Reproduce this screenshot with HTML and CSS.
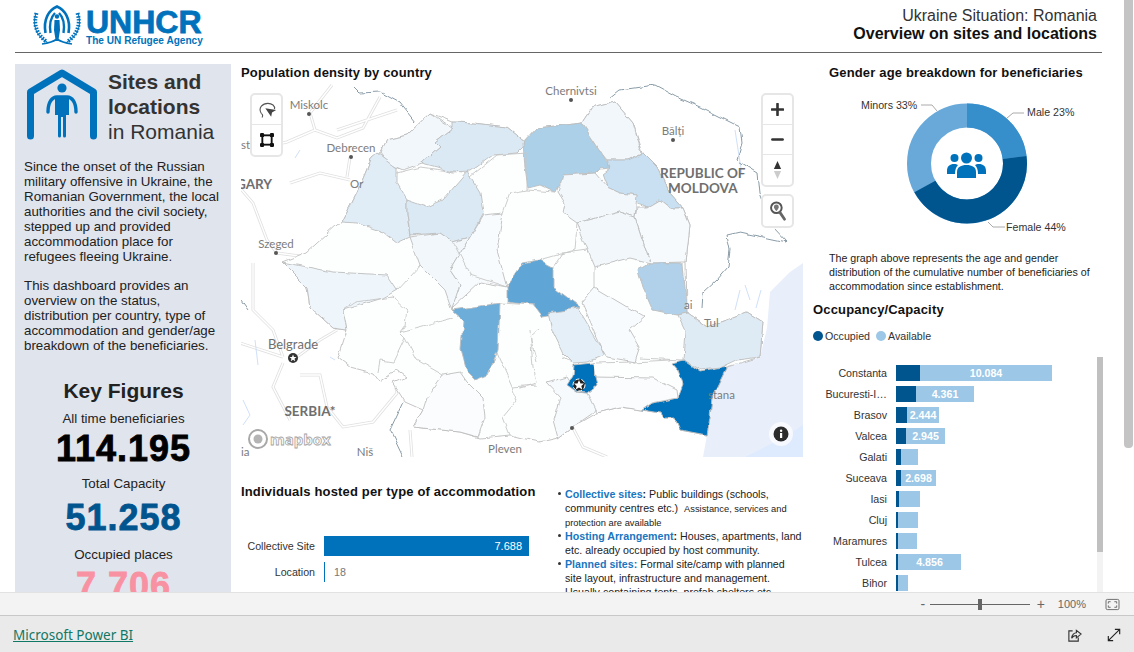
FILE: index.html
```html
<!DOCTYPE html>
<html lang="en">
<head>
    <meta charset="UTF-8">
    <title>Ukraine Situation: Romania</title>
    <link rel="stylesheet" href="styles.css">
</head>
<body>
<div class="page">
    <div class="report">
        <header class="top">
            <div class="brand">
                <svg class="emblem" viewBox="0 0 48 42" width="48" height="42">
                    <g fill="none" stroke="#0072bc">
                        <path d="M3 8 C-1 20 3 31 14 37" stroke-width="1"/>
                        <path d="M45 8 C49 20 45 31 34 37" stroke-width="1"/>
                        <path d="M3.500 8 C0 20 4 30 14 37" stroke-width="4" stroke-dasharray="1.600 1.400"/>
                        <path d="M44.500 8 C48 20 44 30 34 37" stroke-width="4" stroke-dasharray="1.600 1.400"/>
                        <path d="M9 39 C16 38 20 37 24 34 C28 37 32 38 39 39" stroke-width="1.600"/>
                        <path d="M12.500 28 C10 14 16 5 24 1.500 C32 5 38 14 35.500 28" stroke-width="2.600"/>
                        <path d="M17.500 28 C16 18 19 11 22 8 M30.500 28 C32 18 29 11 26 8" stroke-width="2.400"/>
                    </g>
                    <circle cx="24" cy="11.500" r="2.200" fill="#0072bc"/>
                    <path fill="#0072bc" d="M21.500 15 H26.500 L27 25 L25.600 34 H22.400 L21 25 Z"/>
                </svg>
                <div class="wordmark">
                    <span class="wordmark-big">UNHCR</span>
                    <span class="wordmark-small">The UN Refugee Agency</span>
                </div>
            </div>
            <div class="top-title">
                <div>Ukraine Situation: Romania</div>
                <div class="top-title-bold">Overview on sites and locations</div>
            </div>
        </header>

        <div class="columns">
            <aside class="side">
                <div class="side-head">
                    <svg viewBox="0 0 72 72" width="72" height="72">
                        <path d="M3.500 67 V23 L35 4 L66.500 23 V67" fill="none" stroke="#0072bc" stroke-width="7" stroke-linecap="round" stroke-linejoin="round"/>
                        <circle cx="35" cy="19" r="4.600" fill="#0072bc"/>
                        <path d="M21 43 C21 33 25 28 30 28 H40 C45 28 49 33 49 43" fill="none" stroke="#0072bc" stroke-width="3.400" stroke-linecap="round"/>
                        <path d="M28 28 H42 V46 H39 V67 a1.500 1.500 0 0 1 -3 0 V48 H34 V67 a1.500 1.500 0 0 1 -3 0 V46 H28 Z" fill="#0072bc"/>
                    </svg>
                    <div class="side-title">
                        <strong>Sites and<br>locations</strong><br>in Romania
                    </div>
                </div>
                <p class="side-text">Since the onset of the Russian military offensive in Ukraine, the Romanian Government, the local authorities and the civil society, stepped up and provided accommodation place for refugees fleeing Ukraine.</p>
                <p class="side-text">This dashboard provides an overview on the status, distribution per country, type of accommodation and gender/age breakdown of the beneficiaries.</p>
                <h2 class="key-title">Key Figures</h2>
                <div class="kpi-label kpi-label-first">All time beneficiaries</div>
                <div class="kpi kpi-black">114.195</div>
                <div class="kpi-label">Total Capacity</div>
                <div class="kpi kpi-blue">51.258</div>
                <div class="kpi-label">Occupied places</div>
                <div class="kpi kpi-pink">7.706</div>
            </aside>

            <main class="middle">
                <h3 class="visual-title">Population density by country</h3>
                <div class="map">
                    <svg viewBox="241 84 562 373" width="562" height="373">
                        <defs>
                            <filter id="rough" filterUnits="userSpaceOnUse" x="241" y="84" width="562" height="373">
                                <feTurbulence type="fractalNoise" baseFrequency="0.09" numOctaves="2" seed="4" result="noise"/>
                                <feDisplacementMap in="SourceGraphic" in2="noise" scale="5" xChannelSelector="R" yChannelSelector="G"/>
                            </filter>
                        </defs>
                        <rect x="241" y="84" width="562" height="373" fill="#fff"/>
                        <path class="sea" d="M803 263 L790 272 L770 292 L767 328 L760 357 L727 367 L712 397 L710 417 L707 435 L703 457 H803 Z"/>
                        <path class="sea-deep" d="M803 425 C780 440 765 447 745 457 H803 Z"/>
                        <g class="roads">
                            <path d="M332 85 L310 113 L315 130 L287 142 L250 150"/>
                            <path d="M315 130 L337 138 L363 128 L380 97 M337 130 L397 110"/>
                            <path d="M290 183 L320 173 L350 180 M350 157 L347 177"/>
                            <path d="M240 188 L253 203 L267 240 L277 253 L307 257"/>
                            <path d="M253 263 L253 310 L273 330 L283 357 M240 343 L283 357"/>
                            <path d="M293 360 L320 340 L337 330 M283 363 L273 387 L290 420"/>
                            <path d="M300 375 L320 375 L327 407 L343 427 L373 422 L397 393 L395 383"/>
                            <path d="M573 428 L583 447 L607 457 M410 430 L412 457"/>
                        </g>
                        <g class="roads-core">
                            <path d="M332 85 L310 113 L315 130 L287 142 L250 150"/>
                            <path d="M315 130 L337 138 L363 128 L380 97 M337 130 L397 110"/>
                            <path d="M290 183 L320 173 L350 180 M350 157 L347 177"/>
                            <path d="M240 188 L253 203 L267 240 L277 253 L307 257"/>
                            <path d="M253 263 L253 310 L273 330 L283 357 M240 343 L283 357"/>
                            <path d="M293 360 L320 340 L337 330 M283 363 L273 387 L290 420"/>
                            <path d="M300 375 L320 375 L327 407 L343 427 L373 422 L397 393 L395 383"/>
                            <path d="M573 428 L583 447 L607 457 M410 430 L412 457"/>
                        </g>
                        <g class="rivers">
                            <path d="M300 150 L295 158 M243 400 L250 415 L243 425 M255 340 L258 365 M330 357 L335 360"/>
                            <path d="M735 130 L742 175 M740 290 L735 310 M745 285 L750 300 M761 290 L756 308"/>
                        </g>
                        <g filter="url(#rough)">
                            <g class="border">
                                <path d="M610 98 L620 90 L655 85 L677 97 L700 107 L720 117 L740 127 L742 143 L737 160 L758 173 L760 193 L773 227 L787 242 L740 232 L727 235 L730 250 L728 267 L717 280 L703 293 L702 308"/>
                                <path d="M352 85 L360 93 L380 92 L400 103 L415 122"/>
                                <path d="M403 402 L390 430 L403 457 M241 300 L248 310"/>
                            </g>
                            <!-- whole country, counties without data stay near white -->
                            <path class="county" fill="#fdfefe" d="M380 153 L387 140 L407 135 L430 113 L453 122 L473 123 L507 127 L527 143 L537 128 L582 123 L592 108 L615 102 L633 123 L643 153 L657 167 L670 193 L683 208 L690 225 L686 262 L687 313 L707 327 L727 320 L747 312 L763 322 L760 357 L727 367 L712 397 L710 417 L707 435 L680 430 L675 418 L663 418 L660 413 L642 410 L620 407 L597 413 L573 427 L558 438 L540 442 L530 440 L510 435 L480 438 L460 432 L413 427 L423 410 L405 402 L393 383 L407 377 L397 370 L380 382 L373 373 L350 367 L338 358 L347 330 L333 328 L310 307 L307 287 L282 262 L307 252 L337 225 L342 222 L357 193 L372 157 Z"/>
                            <path class="county" fill="#f2f7fb" d="M380 153 L387 140 L407 135 L430 113 L453 128 L440 138 L435 142 L440 147 L422 163 L403 170 L387 163 Z"/>
                            <path class="county" fill="#dbe9f4" d="M453 122 L473 123 L507 127 L527 143 L517 153 L493 155 L470 172 L453 173 L437 167 L422 163 L440 147 L435 142 L453 128 Z"/>
                            <path class="county" fill="#abd0e8" d="M523 143 L537 128 L582 123 L603 155 L610 167 L600 168 L595 173 L563 175 L555 192 L540 185 L528 188 L525 167 Z"/>
                            <path class="county" fill="#f2f7fb" d="M582 123 L592 108 L615 102 L633 123 L642 153 L627 160 L607 160 L603 155 Z"/>
                            <path class="county" fill="#c8e0f1" d="M607 160 L627 160 L643 153 L657 167 L670 193 L683 208 L670 208 L660 200 L648 207 L635 202 L637 195 L620 193 L607 187 L602 173 L610 167 Z"/>
                            <path class="county" fill="#f2f7fb" d="M563 175 L595 173 L607 187 L620 193 L637 195 L635 217 L620 212 L577 223 L563 213 L565 203 L558 192 Z"/>
                            <path class="county" fill="#f6fafd" d="M637 207 L648 207 L660 200 L670 208 L683 208 L690 225 L686 262 L650 263 L635 217 Z"/>
                            <path class="county" fill="#f2f7fb" d="M577 223 L620 212 L635 217 L650 263 L630 258 L595 267 L588 250 Z"/>
                            <path class="county" fill="#b0d1e9" d="M638 270 L650 263 L683 263 L687 313 L677 315 L653 310 L643 287 Z"/>
                            <path class="county" fill="#deebf5" d="M678 315 L687 313 L707 327 L727 320 L747 312 L763 322 L760 357 L737 360 L720 368 L700 370 L683 360 L685 330 Z"/>
                            <path class="county" fill="#0072bc" d="M672 363 L683 360 L700 372 L727 367 L712 397 L710 417 L707 435 L680 430 L675 418 L663 418 L660 413 L642 410 L652 403 L678 398 L683 385 L678 370 Z"/>
                            <path class="county" fill="#5ea5d6" d="M507 287 L523 263 L540 260 L553 267 L553 287 L580 307 L570 312 L542 317 L533 305 L507 302 Z"/>
                            <path class="county" fill="#6cadda" d="M452 310 L500 303 L498 350 L488 375 L475 380 L467 372 L461 350 L463 320 Z"/>
                            <path class="county" fill="#e5eff8" d="M548 313 L578 308 L603 350 L605 355 L588 362 L573 363 L563 353 L552 330 Z"/>
                            <path class="county" fill="#eef5fb" d="M282 262 L333 272 L387 275 L397 290 L383 298 L343 310 L347 330 L333 328 L310 307 L307 287 Z"/>
                            <path class="county" fill="#e0ecf6" d="M377 153 L397 168 L397 183 L407 200 L407 213 L410 237 L397 243 L383 232 L357 223 L342 222 L357 193 L372 157 Z"/>
                            <path class="county" fill="#dbe9f4" d="M407 200 L427 207 L443 200 L467 172 L480 193 L483 213 L470 237 L453 242 L440 233 L410 235 L407 213 Z"/>
                            <path class="county" fill="#f2f7fb" d="M410 237 L440 233 L453 242 L470 237 L450 270 L460 285 L452 310 L445 290 L420 265 Z"/>
                            <path class="county" fill="#f8fbfd" d="M470 237 L483 215 L503 213 L497 250 L507 287 L480 282 L452 308 L460 285 L450 270 Z"/>
                            <path class="county" fill="#f6fafd" d="M547 383 L567 377 L577 392 L587 393 L597 405 L593 413 L573 427 L558 438 L553 420 L560 397 Z"/>
                            <path class="county" fill="#fafcfe" d="M443 375 L460 372 L467 382 L483 398 L485 417 L478 437 L460 432 L413 427 L423 410 L427 397 Z"/>
                            <path class="county" fill="#f8fbfe" d="M582 303 L595 288 L627 307 L645 317 L630 330 L640 347 L635 362 L607 357 L603 350 Z"/>
                            <path class="county" fill="#fafcfe" d="M595 377 L653 378 L677 390 L678 398 L652 403 L642 410 L620 407 L597 413 L587 393 Z"/>
                            <path class="county" fill="#0072bc" d="M573 365 L593 363 L595 377 L597 385 L587 393 L577 392 L567 385 L572 377 Z"/>
                            <g class="lines">
                                <path d="M343 310 L355 302 L393 297 L407 310 L405 325 L400 332 L405 337 L393 362 L380 360 L378 372"/>
                                <path d="M400 332 L453 318 M405 337 L417 360 L443 375"/>
                                <path d="M488 375 L497 353 L512 387 L537 385 M512 387 L517 400 L503 417 L510 435"/>
                                <path d="M537 362 L530 337 L540 328 M500 303 L535 305 M530 330 L533 367 L537 383 L520 388"/>
                                <path d="M563 357 L573 363 M595 363 L633 362 L670 360 M595 377 L593 363"/>
                                <path d="M553 267 L563 253 L588 250 M595 267 L595 288 M527 153 L527 190 L510 193 L503 213"/>
                                <path d="M397 173 L420 167 L463 173 M470 177 L497 155 L527 153 M640 358 L683 360"/>
                                <path d="M555 192 L527 190 M577 223 L575 250 L540 260"/>
                                <path d="M453 242 L470 275 L507 287 M397 290 L420 265"/>
                            </g>
                        </g>
                        <g class="place">
                            <text x="309" y="109" text-anchor="middle">Miskolc</text>
                            <text x="351" y="152" text-anchor="middle">Debrecen</text>
                            <text x="350" y="188">Or</text>
                            <text x="241" y="149">st</text>
                            <text x="276" y="248" text-anchor="middle">Szeged</text>
                            <text x="571" y="95" text-anchor="middle">Chernivtsi</text>
                            <text x="673" y="135" text-anchor="middle">Bălți</text>
                            <text x="505" y="453" text-anchor="middle">Pleven</text>
                            <text x="365" y="456" text-anchor="middle">Niš</text>
                            <text x="708" y="399">stana</text>
                            <text x="704" y="327">Tul</text>
                            <text x="684" y="309">ai</text>
                            <text x="241" y="456">ia</text>
                        </g>
                        <g class="place-dot">
                            <circle cx="309" cy="114" r="2"/>
                            <circle cx="351" cy="157" r="2"/>
                            <circle cx="276" cy="253" r="2"/>
                            <circle cx="571" cy="100" r="2"/>
                            <circle cx="673" cy="140" r="2"/>
                            <circle cx="572" cy="428" r="2"/>
                        </g>
                        <g class="place-big">
                            <text x="660" y="178">REPUBLIC OF</text>
                            <text x="668" y="193">MOLDOVA</text>
                            <text x="272" y="189" text-anchor="end">GARY</text>
                            <text x="310" y="416" text-anchor="middle">SERBIA*</text>
                        </g>
                        <text class="place-capital" x="293" y="349" text-anchor="middle">Belgrade</text>
                        <circle cx="293" cy="358" r="5" fill="#333"/>
                        <polygon points="293,354.500 294,357 296.500,357 294.500,358.800 295.300,361.300 293,359.800 290.700,361.300 291.500,358.800 289.500,357 292,357" fill="#fff"/>
                        <circle cx="579" cy="385" r="6" fill="#222" stroke="#fff" stroke-dasharray="4 2"/>
                        <polygon points="579,380 580.500,383.500 584,383.500 581.300,386 582.300,389.500 579,387.500 575.700,389.500 576.700,386 574,383.500 577.500,383.500" fill="#fff"/>
                        <circle cx="258" cy="439" r="9" fill="#fff" fill-opacity=".7" stroke="#a8a8a8" stroke-width="2"/>
                        <circle cx="258" cy="439" r="4.500" fill="#b4b4b4"/>
                        <text class="mapbox" x="270" y="445">mapbox</text>
                        <circle cx="781" cy="434" r="12" fill="#fff" fill-opacity=".7"/>
                        <circle cx="781" cy="434" r="7.500" fill="#2b2b2b"/>
                        <rect x="780" y="433" width="2.200" height="5" fill="#fff"/>
                        <circle cx="781.100" cy="430.800" r="1.200" fill="#fff"/>
                    </svg>
                    <div class="map-tools map-tools-left">
                        <div class="map-tool">
                            <svg viewBox="0 0 24 24" width="20" height="20"><path d="M5 16 C1 9 7 4 13 4 C18 4 22 7 21 11" fill="none" stroke="#555" stroke-width="1.300"/><path d="M5 16 q3 2 1 5" fill="none" stroke="#555" stroke-width="1.300"/><path d="M10 10 L23 12 L18 15 L17 20 Z" fill="#444"/></svg>
                        </div>
                        <div class="map-tool">
                            <svg viewBox="0 0 24 24" width="14" height="14"><rect x="4" y="4" width="16" height="16" fill="none" stroke="#111" stroke-width="3.200"/><rect x="0" y="0" width="7" height="7" rx="2" fill="#111"/><rect x="17" y="0" width="7" height="7" rx="2" fill="#111"/><rect x="0" y="17" width="7" height="7" rx="2" fill="#111"/><rect x="17" y="17" width="7" height="7" rx="2" fill="#111"/></svg>
                        </div>
                    </div>
                    <div class="map-tools map-tools-right">
                        <div class="map-tool"><svg viewBox="0 0 14 14" width="13" height="13"><path d="M7 1 V13 M1 7 H13" stroke="#333" stroke-width="2.800" stroke-linecap="round"/></svg></div>
                        <div class="map-tool"><svg viewBox="0 0 14 14" width="13" height="13"><path d="M1.500 7 H12.500" stroke="#333" stroke-width="2.800" stroke-linecap="round"/></svg></div>
                        <div class="map-tool"><svg viewBox="0 0 10 22" width="9" height="20"><path d="M5 1 L9 10 H1 Z" fill="#333"/><path d="M5 21 L9 12 H1 Z" fill="#ccc"/></svg></div>
                    </div>
                    <div class="map-tools map-tools-search">
                        <div class="map-tool">
                            <svg viewBox="0 0 22 26" width="18" height="22"><circle cx="9" cy="9" r="6.500" fill="none" stroke="#555" stroke-width="2.400"/><path d="M9 5 a3 3 0 0 1 3 3 c0 2 -3 5 -3 5 s-3 -3 -3 -5 a3 3 0 0 1 3 -3 Z" fill="#777"/><path d="M13.500 15 L19 23" stroke="#666" stroke-width="3.400" stroke-linecap="round"/></svg>
                        </div>
                    </div>
                </div>

                <div class="lower">
                    <div class="hosted">
                        <h3 class="visual-title hosted-title">Individuals hosted per type of accommodation</h3>
                        <div class="hosted-row">
                            <span class="hosted-label">Collective Site</span>
                            <div class="hosted-bar"><span>7.688</span></div>
                        </div>
                        <div class="hosted-row">
                            <span class="hosted-label">Location</span>
                            <div class="hosted-tick"></div>
                            <span class="hosted-value">18</span>
                        </div>
                    </div>
                    <ul class="defs">
                        <li><b>Collective sites<i>:</i></b> Public buildings (schools, community centres etc.) &nbsp;<small>Assistance, services and protection are available</small></li>
                        <li><b>Hosting Arrangement<i>:</i></b> Houses, apartments, land etc. already occupied by host community.</li>
                        <li><b>Planned sites:</b> Formal site/camp with planned site layout, infrastructure and management. Usually containing tents, prefab shelters etc.</li>
                    </ul>
                </div>
            </main>

            <section class="right">
                <h3 class="visual-title gender-title">Gender age breakdown for beneficiaries</h3>
                <svg class="donut" viewBox="813 84 284 160" width="284" height="160">
                    <circle cx="967" cy="163.500" r="48" fill="none" stroke="#68a9d9" stroke-width="24"/>
                    <path d="M967 115.500 A48 48 0 0 1 1014.600 157.500" fill="none" stroke="#368ecb" stroke-width="24"/>
                    <path d="M1014.600 157.500 A48 48 0 0 1 924.900 186.600" fill="none" stroke="#00558f" stroke-width="24"/>
                    <g fill="none" stroke="#aaa">
                        <path d="M921 105 H932 L937 111"/>
                        <path d="M1007 118 L1013 113 H1024"/>
                        <path d="M988 222 L993 227 H1005"/>
                    </g>
                    <g class="donut-label">
                        <text x="861" y="109">Minors 33%</text>
                        <text x="1027" y="116">Male 23%</text>
                        <text x="1006" y="231">Female 44%</text>
                    </g>
                    <g fill="#0072bc">
                        <circle cx="966.500" cy="158" r="5.500"/>
                        <circle cx="954.500" cy="158" r="4"/>
                        <circle cx="978.500" cy="158" r="4"/>
                        <path d="M947 174 V171 C947 166 950 164 954 164 C956 164 957 164.500 958 165 C956 167 955 170 955 174 Z"/>
                        <path d="M986 174 V171 C986 166 983 164 979 164 C977 164 976 164.500 975 165 C977 167 978 170 978 174 Z"/>
                        <path d="M957 178 V172 C957 167 961 165 966.500 165 C972 165 976 167 976 172 V178 Z"/>
                    </g>
                </svg>
                <p class="gender-text">The graph above represents the age and gender distribution of the cumulative number of beneficiaries of accommodation since establishment.</p>
                <h3 class="visual-title occ-title">Occupancy/Capacity</h3>
                <div class="legend">
                    <span class="dot dot-dark"></span><span>Occupied</span>
                    <span class="dot dot-light"></span><span>Available</span>
                </div>
                <div class="occ-chart">
                    <div class="occ-row"><span class="occ-label">Constanta</span><span class="occ-dark" style="width:24px"></span><span class="occ-light" style="width:132px">10.084</span></div>
                    <div class="occ-row"><span class="occ-label">Bucuresti-I…</span><span class="occ-dark" style="width:20px"></span><span class="occ-light" style="width:58px">4.361</span></div>
                    <div class="occ-row"><span class="occ-label">Brasov</span><span class="occ-dark" style="width:11px"></span><span class="occ-light" style="width:32px">2.444</span></div>
                    <div class="occ-row"><span class="occ-label">Valcea</span><span class="occ-dark" style="width:10px"></span><span class="occ-light" style="width:39px">2.945</span></div>
                    <div class="occ-row"><span class="occ-label">Galati</span><span class="occ-dark" style="width:5px"></span><span class="occ-light" style="width:17px"></span></div>
                    <div class="occ-row"><span class="occ-label">Suceava</span><span class="occ-dark" style="width:5px"></span><span class="occ-light" style="width:35px">2.698</span></div>
                    <div class="occ-row"><span class="occ-label">Iasi</span><span class="occ-dark" style="width:3px"></span><span class="occ-light" style="width:21px"></span></div>
                    <div class="occ-row"><span class="occ-label">Cluj</span><span class="occ-dark" style="width:2px"></span><span class="occ-light" style="width:20px"></span></div>
                    <div class="occ-row"><span class="occ-label">Maramures</span><span class="occ-dark" style="width:2px"></span><span class="occ-light" style="width:19px"></span></div>
                    <div class="occ-row"><span class="occ-label">Tulcea</span><span class="occ-dark" style="width:2px"></span><span class="occ-light" style="width:63px">4.856</span></div>
                    <div class="occ-row"><span class="occ-label">Bihor</span><span class="occ-dark" style="width:2px"></span><span class="occ-light" style="width:10px"></span></div>
                    <div class="occ-track"><div class="occ-thumb"></div></div>
                </div>
            </section>
        </div>
        <div class="page-scroll"></div>
    </div>

    <div class="zoombar">
        <span class="zoom-sign">-</span>
        <div class="zoom-slider"><div class="zoom-thumb"></div></div>
        <span class="zoom-sign">+</span>
        <span class="zoom-value">100%</span>
        <svg viewBox="0 0 16 14" width="15" height="13"><rect x="1" y="1.500" width="14" height="11" rx="1.500" fill="none" stroke="#666"/><path d="M3.500 6 V4 H6 M10 4 H12.500 V6 M12.500 8 V10 H10 M6 10 H3.500 V8" fill="none" stroke="#666"/></svg>
    </div>
    <footer class="footer">
        <a class="pbi-link" href="#">Microsoft Power BI</a>
        <div class="footer-icons">
            <svg viewBox="0 0 16 16" width="15" height="15"><path d="M6 3 H2 V14 H12 V10" fill="none" stroke="#333" stroke-width="1.200"/><path d="M5 11 C5 7 8 5 10 5 V2.500 L15 6.500 L10 10.500 V8 C8 8 6 9 5 11 Z" fill="none" stroke="#333" stroke-width="1.200"/></svg>
            <svg viewBox="0 0 16 16" width="14" height="14"><path d="M1.500 14.500 L14.500 1.500 M9 1.500 H14.500 V7 M1.500 9 V14.500 H7" fill="none" stroke="#222" stroke-width="1.300"/></svg>
        </div>
    </footer>
</div>
</body>
</html>
```

FILE: styles.css
```css
* {
    box-sizing: border-box;
}
body {
    margin: 0;
    font-family: "Liberation Sans", Arial, sans-serif;
    color: #222;
    background: #fff;
}
.page {
    width: 1134px;
    height: 652px;
    display: flex;
    flex-direction: column;
    overflow: hidden;
}
.report {
    position: relative;
    height: 592px;
    padding-left: 15px;
    overflow: hidden;
    flex: none;
}
.page-scroll {
    position: absolute;
    right: 1px;
    top: 0;
    width: 9px;
    height: 448px;
    background: #c4c4c4;
    border-radius: 0 0 4px 4px;
}

/* header */
.top {
    width: 1087px;
    height: 53px;
    border-bottom: 1px solid #666;
    display: flex;
    justify-content: space-between;
}
.brand {
    display: flex;
    gap: 5px;
    padding: 5px 0 0 18px;
}
.wordmark {
    display: flex;
    flex-direction: column;
    color: #0072bc;
    font-weight: 700;
}
.wordmark-big {
    font-size: 32px;
    line-height: 29px;
    margin-top: 3px;
    -webkit-text-stroke: .8px #0072bc;
}
.wordmark-small {
    font-size: 10.100px;
    line-height: 11px;
    margin-top: -2px;
}
.top-title {
    text-align: right;
    font-size: 16px;
    line-height: 18px;
    padding: 7px 5px 0 0;
    color: #333;
}
.top-title-bold {
    font-weight: 700;
    color: #111;
}

.columns {
    display: grid;
    grid-template-columns: 216px 562px 290px;
    column-gap: 10px;
    margin-top: 12px;
}

/* left panel */
.side {
    background: #e0e4ed;
    height: 540px;
    margin-top: -1px;
    padding: 5px 8px 0 9px;
    overflow: hidden;
}
.side-head {
    display: flex;
    gap: 9px;
    margin-left: 3px;
    height: 80px;
}
.side-title {
    font-size: 21px;
    line-height: 25px;
    color: #333;
}
.side-text {
    font-size: 13.330px;
    line-height: 15px;
    margin: 10px 0 14px;
    color: #222;
}
.side-text + .side-text {
    margin-top: 0;
}
.key-title {
    font-size: 21px;
    line-height: 24px;
    text-align: center;
    margin: 26px 0 0;
    color: #222;
}
.kpi-label {
    font-size: 13.330px;
    line-height: 15px;
    text-align: center;
}
.kpi-label-first {
    margin-top: 8px;
}
.kpi {
    font-size: 36px;
    line-height: 44px;
    font-weight: 700;
    text-align: center;
    letter-spacing: 1px;
    -webkit-text-stroke: .8px currentColor;
}
.kpi-black {
    color: #000;
    margin-top: 1px;
    margin-bottom: 5px;
}
.kpi-blue {
    color: #00558f;
    margin-top: 5px;
    margin-bottom: 7px;
}
.kpi-pink {
    color: #f892a2;
    margin-top: 2px;
}

/* titles */
.visual-title {
    font-size: 13px;
    line-height: 16px;
    font-weight: 700;
    margin: 0;
    color: #111;
    letter-spacing: .16px;
}

/* map */
.middle {
    min-width: 0;
}
.map {
    position: relative;
    width: 562px;
    height: 373px;
    margin-top: 3px;
    overflow: hidden;
}
.map > svg {
    display: block;
}
.sea {
    fill: #e8effb;
}
.sea-deep {
    fill: #deeafd;
}
.roads path {
    fill: none;
    stroke: #e0e0e0;
    stroke-width: 3;
}
.roads-core path {
    fill: none;
    stroke: #fff;
    stroke-width: 1.400;
}
.rivers path {
    fill: none;
    stroke: #cfe0fa;
    stroke-width: 1;
}
.border path {
    fill: none;
    stroke: #8a9ca8;
    stroke-width: 1;
}
.county {
    stroke: #bdbdbd;
    stroke-width: .9;
    stroke-linejoin: round;
}
.lines path {
    fill: none;
    stroke: #c6c6c6;
    stroke-width: .9;
}
.place text {
    font-family: Lato, sans-serif;
    font-size: 11.500px;
    fill: #7c7c7c;
}
.place-dot circle {
    fill: #555;
}
.place-big text {
    font-family: Lato, sans-serif;
    font-size: 13.500px;
    font-weight: 700;
    fill: #6f6f6f;
}
.place-capital {
    font-family: Lato, sans-serif;
    font-size: 13px;
    fill: #6f6f6f;
}
.mapbox {
    font-family: "Open Sans", sans-serif;
    font-size: 15px;
    font-weight: 700;
    fill: #fff;
    stroke: #a4a4a4;
    stroke-width: .8px;
}
.map-tools {
    position: absolute;
    width: 33px;
    background: #fff;
    border: 2px solid #e6e6e6;
    border-radius: 5px;
}
.map-tools-left {
    left: 9px;
    top: 9px;
}
.map-tools-right {
    left: 520px;
    top: 9px;
}
.map-tools-search {
    left: 520px;
    top: 110px;
}
.map-tool {
    height: 30px;
    display: flex;
    align-items: center;
    justify-content: center;
    border-bottom: 1px solid #e6e6e6;
}
.map-tool:last-child {
    border-bottom: 0;
}

/* lower middle */
.lower {
    display: flex;
    gap: 21px;
    margin-top: 27px;
}
.hosted {
    width: 295px;
    flex: none;
}
.hosted-title {
    white-space: nowrap;
}
.hosted-row {
    display: flex;
    align-items: center;
    height: 20px;
    margin-bottom: 6px;
    font-size: 10.670px;
    color: #333;
}
.hosted-title + .hosted-row {
    margin-top: 36px;
}
.hosted-label {
    width: 74px;
    text-align: right;
    margin-right: 9px;
}
.hosted-bar {
    width: 205px;
    height: 20px;
    background: #0072bc;
    color: #fff;
    font-size: 11px;
    line-height: 20px;
    text-align: right;
    padding-right: 7px;
}
.hosted-tick {
    width: 1px;
    height: 20px;
    background: #0072bc;
}
.hosted-value {
    margin-left: 9px;
    color: #777;
}
.defs {
    list-style: none;
    margin: 3px 0 0;
    padding: 0 0 0 8px;
    width: 246px;
    font-size: 10.670px;
    line-height: 14px;
    color: #222;
}
.defs li {
    position: relative;
}
.defs li::before {
    content: "";
    position: absolute;
    left: -7px;
    top: 5px;
    width: 3px;
    height: 3px;
    background: #333;
    border-radius: 50%;
}
.defs b {
    color: #1976bf;
}
.defs i {
    font-style: normal;
    color: #222;
}
.defs small {
    font-size: 9.330px;
    line-height: 1;
}

/* right column */
.right {
    min-width: 0;
}
.gender-title {
    margin-left: 16px;
}
.donut {
    display: block;
    margin-top: 3px;
}
.donut-label text {
    font-size: 10.670px;
    fill: #333;
}
.gender-text {
    margin: 7px 0 0 16px;
    width: 270px;
    font-size: 10.670px;
    line-height: 14px;
    color: #222;
}
.occ-title {
    margin-top: 9px;
}
.legend {
    display: flex;
    align-items: center;
    font-size: 10.670px;
    color: #333;
    margin-top: 12px;
    height: 12px;
}
.dot {
    width: 10px;
    height: 10px;
    border-radius: 50%;
    margin-right: 2px;
}
.dot-dark {
    background: #00558f;
}
.dot-light {
    background: #9cc7e6;
    margin-left: 6px;
}
.occ-chart {
    position: relative;
    margin-top: 15px;
    padding-top: 5px;
    height: 240px;
    overflow: hidden;
}
.occ-row {
    display: flex;
    align-items: center;
    height: 21px;
}
.occ-label {
    width: 74px;
    margin-right: 9px;
    text-align: right;
    font-size: 10.670px;
    color: #333;
    white-space: nowrap;
}
.occ-dark {
    height: 16px;
    background: #00558f;
    flex: none;
}
.occ-light {
    height: 16px;
    background: #9cc7e6;
    color: #fff;
    font-size: 10.670px;
    font-weight: 700;
    line-height: 16px;
    text-align: center;
    flex: none;
}
.occ-track {
    position: absolute;
    left: 284px;
    top: 0;
    width: 8px;
    height: 240px;
    background: #f3f3f3;
}
.occ-thumb {
    height: 195px;
    background: #c0c0c0;
}

/* bottom bars */
.zoombar {
    height: 23px;
    flex: none;
    background: #f3f3f3;
    border-top: 1px solid #e2e2e2;
    display: flex;
    align-items: center;
    justify-content: flex-end;
    padding-right: 14px;
    color: #666;
    font-size: 11px;
}
.zoom-sign {
    width: 6px;
    text-align: center;
    font-size: 14px;
}
.zoom-slider {
    position: relative;
    width: 100px;
    height: 1px;
    background: #666;
    margin: 0 7px 0 4px;
}
.zoom-thumb {
    position: absolute;
    left: 48px;
    top: -5px;
    width: 4px;
    height: 11px;
    background: #666;
}
.zoom-value {
    margin: 0 19px 0 15px;
}
.footer {
    flex: 1;
    background: #eaeaea;
    border-top: 1px solid #c8c8c8;
    display: flex;
    align-items: center;
    justify-content: space-between;
    padding: 2px 13px 0;
}
.pbi-link {
    font-family: "Noto Sans", sans-serif;
    font-size: 13.500px;
    color: #117865;
}
.footer-icons {
    display: flex;
    align-items: center;
    gap: 25px;
}
```
